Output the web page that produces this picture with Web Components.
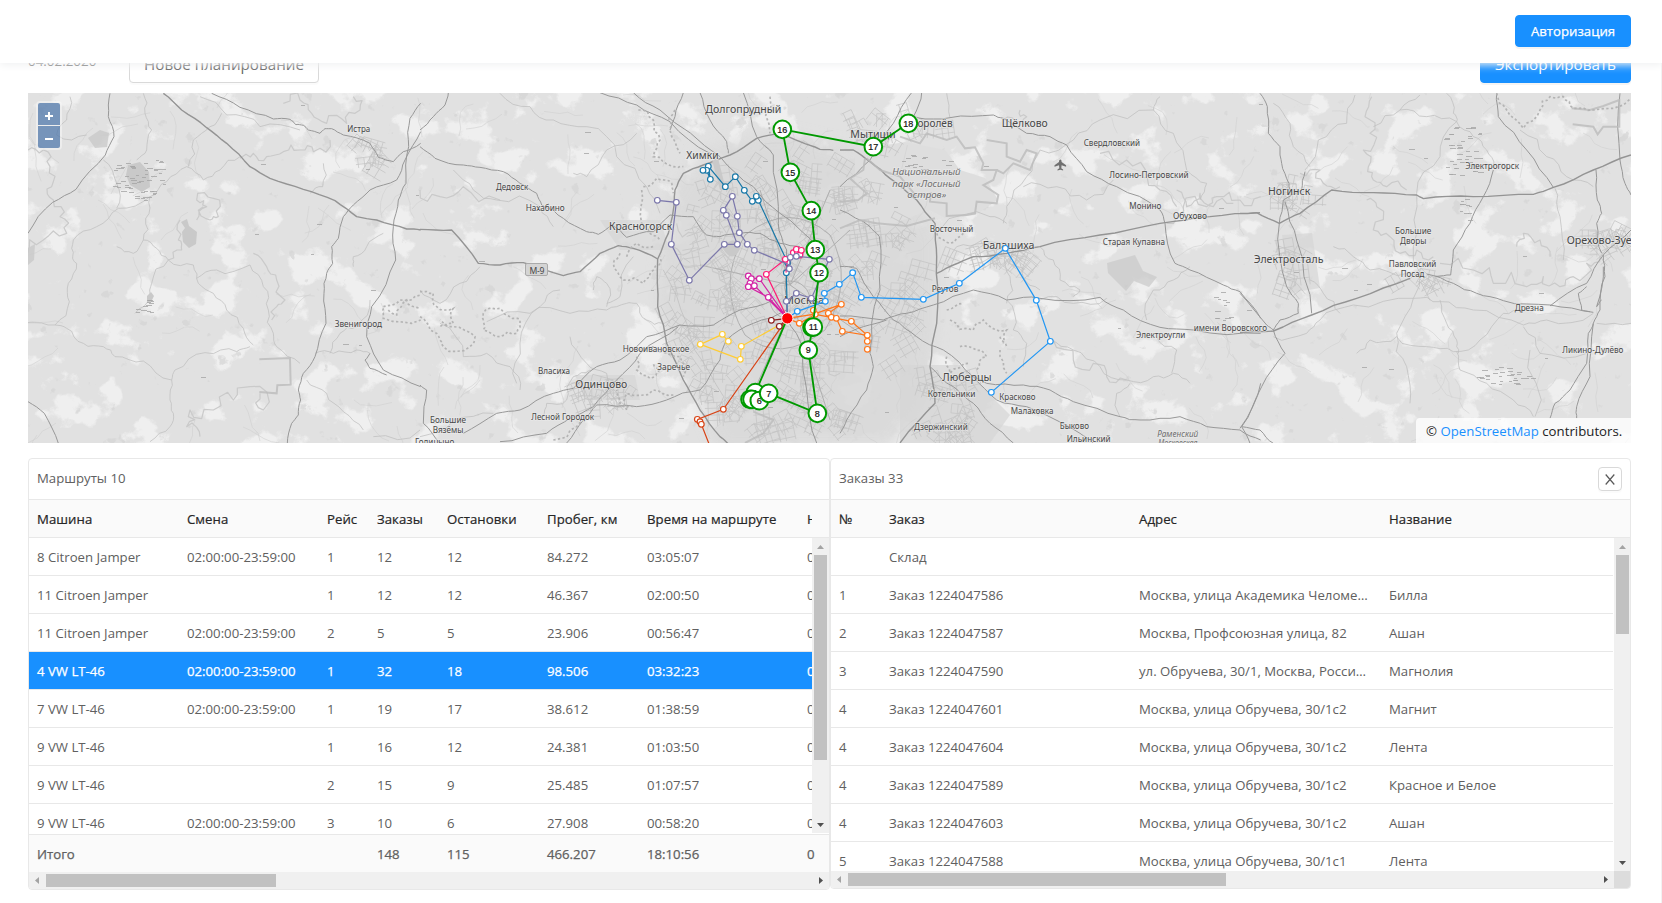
<!DOCTYPE html>
<html lang="ru">
<head>
<meta charset="utf-8">
<title>Планирование маршрутов</title>
<style>
html,body{margin:0;height:903px;overflow:hidden;background:#fff}
body{font:13.2px/20px "Open Sans","Noto Sans",sans-serif;color:#606060}
</style>
</head>
<body>
<planner-app></planner-app>
<script>
const define = (name, render, after) => customElements.define(name, class extends HTMLElement {
  connectedCallback() {
    if (this.shadowRoot) return;
    this.attachShadow({ mode: 'open' }).innerHTML = render(this);
    if (after) after(this);
  }
});

define('ui-button', () => `<style>
:host{display:flex;align-items:center;justify-content:center;box-sizing:border-box;height:32px;border:1px solid #d9d9d9;border-radius:4px;background:#fff;color:#606060;box-shadow:0 2px 0 rgba(0,0,0,.015);white-space:nowrap}
:host([primary]){background:#1890ff;border-color:#1890ff;color:#fff;box-shadow:0 2px 0 rgba(0,0,0,.045)}
:host([large]){height:40px;font-size:15.2px;padding-top:2px}
:host([small]){height:24px;width:24px;font-size:13.2px}
</style><slot></slot>`);

define('app-header', () => `<style>
:host{display:flex;flex:none;height:63px;box-sizing:border-box;padding:15px 31px 0 0;justify-content:flex-end;align-items:flex-start;background:#fff;box-shadow:0 2px 8px #f0f1f2;position:relative;z-index:2}
ui-button{width:116px;-webkit-text-stroke:.25px}
</style><ui-button primary>Авторизация</ui-button>`);

define('plan-toolbar', () => `<style>
:host{display:flex;flex:none;height:40px;margin:-20px 31px 10px 28px;align-items:flex-start}
span{width:101px;line-height:36px;font-size:13.4px}
.gap{flex:1}
</style><span>04.02.2020</span><ui-button large style="width:190px">Новое планирование</ui-button><div class="gap"></div><ui-button large primary style="width:151px">Экспортировать</ui-button>`);

/* Scroll bar with arrows; the thumb length is given in pixels. */
define('scroll-bar', el => {
  const v = el.hasAttribute('vertical'), l = el.getAttribute('length');
  return `<style>
:host{display:flex;flex:none;flex-direction:${v ? 'column' : 'row'};background:#f0f0f0;${v ? 'width:17px' : 'height:17px'};align-items:center;justify-content:space-between}
i{display:block;background:#c1c1c1;${v ? `width:13px;height:${l}px` : `height:13px;width:${l}px`}}
b{flex:1}svg{display:block;flex:none}
</style><svg width="17" height="17"><path fill="#a3a3a3" d="${v ? 'M5 11h7L8.5 7z' : 'M10 5v7L6 8.5z'}"/></svg><i></i><b></b><svg width="17" height="17"><path fill="#505050" d="${v ? 'M5 7h7L8.5 11z' : 'M7 5v7l4-3.5z'}"/></svg>`;
});

const TABLES = {
  routes: {
    cols: [150, 140, 50, 70, 100, 100, 160, 60],
    head: ['Машина', 'Смена', 'Рейс', 'Заказы', 'Остановки', 'Пробег, км', 'Время на маршруте', 'Н'],
    rows: [
      ['8 Citroen Jamper', '02:00:00-23:59:00', '1', '12', '12', '84.272', '03:05:07', '0'],
      ['11 Citroen Jamper', '', '1', '12', '12', '46.367', '02:00:50', '0'],
      ['11 Citroen Jamper', '02:00:00-23:59:00', '2', '5', '5', '23.906', '00:56:47', '0'],
      ['4 VW LT-46', '02:00:00-23:59:00', '1', '32', '18', '98.506', '03:32:23', '0'],
      ['7 VW LT-46', '02:00:00-23:59:00', '1', '19', '17', '38.612', '01:38:59', '0'],
      ['9 VW LT-46', '', '1', '16', '12', '24.381', '01:03:50', '0'],
      ['9 VW LT-46', '', '2', '15', '9', '25.485', '01:07:57', '0'],
      ['9 VW LT-46', '02:00:00-23:59:00', '3', '10', '6', '27.908', '00:58:20', '0']],
    active: 3,
    foot: ['Итого', '', '', '148', '115', '466.207', '18:10:56', '0'],
    clip: 783, v: [205, 295], h: 230
  },
  orders: {
    cols: [50, 250, 250, 250],
    head: ['№', 'Заказ', 'Адрес', 'Название'],
    rows: [
      ['', 'Склад', '', ''],
      ['1', 'Заказ 1224047586', 'Москва, улица Академика Челоме…', 'Билла'],
      ['2', 'Заказ 1224047587', 'Москва, Профсоюзная улица, 82', 'Ашан'],
      ['3', 'Заказ 1224047590', 'ул. Обручева, 30/1, Москва, Росси…', 'Магнолия'],
      ['4', 'Заказ 1224047601', 'Москва, улица Обручева, 30/1с2', 'Магнит'],
      ['4', 'Заказ 1224047604', 'Москва, улица Обручева, 30/1с2', 'Лента'],
      ['4', 'Заказ 1224047589', 'Москва, улица Обручева, 30/1с2', 'Красное и Белое'],
      ['4', 'Заказ 1224047603', 'Москва, улица Обручева, 30/1с2', 'Ашан'],
      ['5', 'Заказ 1224047588', 'Москва, улица Обручева, 30/1с1', 'Лента']],
    active: -1, clip: 800, v: [79, 333], h: 378
  }
};
define('data-grid', el => {
  const t = TABLES[el.getAttribute('source')], orders = !t.foot;
  const row = (r, c = '') => `<div class="r ${c}">${r.map(x => `<span>${x}</span>`).join('')}</div>`;
  return `<style>
:host{display:flex;flex-direction:column}
.r{display:grid;grid-template-columns:${t.cols.map(c => c + 'px').join(' ')};height:37px;line-height:39px;border-bottom:1px solid #e8e8e8}
span{padding:0 8px;white-space:nowrap;height:37px}
.h{background:#fafafa;color:#262626;-webkit-text-stroke:.2px;letter-spacing:.05px}
.clip{overflow:hidden;width:${t.clip}px}
.head{background:#fafafa;border-bottom:1px solid #e8e8e8}.head .r{border:0}
.body{display:flex;height:${t.v[1]}px;overflow:hidden}
.rows{overflow:hidden;width:${orders ? 782 : 783}px;${orders ? 'margin-right:1px' : ''}}
.a{background:#1890ff;color:#fff;-webkit-text-stroke:.25px}
.f{background:#fafafa;border:0;border-top:1px solid #e8e8e8;-webkit-text-stroke:.25px;overflow:hidden}
.foot{padding-top:1px}
.hs{display:flex}.hs scroll-bar{flex:1}.corner{width:16px;background:#dcdcdc}
.v{overflow:hidden}
</style>
<div class="head"><div class="clip">${row(t.head, 'h')}</div></div>
<div class="body"><div class="rows">${t.rows.map((r, i) => row(r, i === t.active ? 'a' : '')).join('')}</div><scroll-bar class="v" vertical length="${t.v[0]}" ${orders ? 'style="width:16px"' : ''}></scroll-bar></div>
${t.foot ? `<div class="foot">${row(t.foot, 'f')}</div>` : ''}
<div class="hs"><scroll-bar length="${t.h}"></scroll-bar>${orders ? '<div class="corner"></div>' : ''}</div>`;
});

define('data-card', el => `<style>
:host{display:block;box-sizing:border-box;border:1px solid #e8e8e8;border-radius:4px;overflow:hidden;background:#fff}
header{display:flex;justify-content:space-between;align-items:center;height:40px;padding:0 8px;border-bottom:1px solid #e8e8e8}
header>span{margin-top:-2px}
</style><header><span>${el.getAttribute('title-text')}</span><slot name="action"></slot></header><slot></slot>`);

/* ---- map ---- */
/* Each sheet is traced on a grid of thirds of a pixel with its own origin. */
const ORIGIN = { a: [0, 0], b: [420, 90], m: [640, 90], d: [840, 90], e: [1240, 0] };
const ROADS = {
  a: {
    main: ['490,280 545,330 620,383 680,430 750,500 810,535 910,568 1005,602 1070,650 1130,660 1220,687 1262,690'],
    mid: ['330,280 325,350 342,410 316,465 228,568 158,607 84,700',
      '635,280 720,322 820,357 870,358 888,374 910,376 925,390 960,400 975,386 995,386 1030,405 1110,430 1135,472 1180,485 1210,455 1262,430',
      '1262,310 1230,355 1226,440 1218,550 1195,600 1180,680 1187,780 1115,920 1100,1010 1150,1110 1262,1160',
      '1262,395 1215,480 1190,540 1110,570 1060,615 1030,650 1015,715 995,740 998,790 980,820 972,880 978,970 945,1070 910,1120 895,1170 902,1200 895,1245 875,1270 862,1330',
      '84,1205 133,1240 175,1330', '1110,1060 1095,1080 1110,1105 1160,1125'],
    low: ['84,968 165,975 200,985 250,1030 310,1040 345,1070 430,1083 515,1140 525,1110 615,1058 710,1055 750,1040',
      '720,470 660,510 610,540 560,500 500,545 450,590 355,625 290,680 220,720 218,770 230,790 205,850 208,905 165,975',
      '450,590 437,655 430,720 470,745 505,780 580,795 595,850 640,880 680,930 730,985 760,1035', '505,780 455,850 450,890 405,940',
      '515,1140 510,1200 520,1240 510,1280 450,1325', '310,480 350,550 350,625', '590,835 650,810 750,795 790,860 805,930 820,1000 830,1040 900,1090',
      '945,1060 1000,1060 1070,1050 1110,1060', '430,280 435,340 455,390 440,450 410,480', '210,290 200,360 170,405 260,405',
      '600,290 680,345 780,380 900,390', '565,500 580,420 630,380 665,340', '920,1140 980,1180 1030,1235 1090,1290', '970,490 968,560 930,580',
      '430,720 400,760 350,740', '1120,1310 1260,1290', '1060,800 1060,770 1100,740 1150,700', '990,1060 1020,1000 1070,980 1110,900'],
    river: ['84,760 130,720 200,700 180,650 160,600 155,560 150,500 130,450 84,450', '720,475 760,460 800,470 850,455 900,450 940,455 990,420',
      '590,660 620,620 590,600 640,595 655,650 630,660 610,620', '760,760 800,800 830,840 855,900 830,920 815,960',
      '780,1180 790,1230 750,1160 700,1200 640,1230 570,1230 560,1280 600,1310', '850,310 900,300 935,340 980,370 1040,370 1080,330 1060,290', '540,660 535,720 545,750 505,780']
  },
  b: {
    main: ['0,418 95,420 175,520 240,525 310,518 430,557 480,545 540,490 595,467 640,475 713,507',
      '1240,181 1200,178 1140,155 1080,130 1010,145 930,195 850,225 790,250 765,300 757,380 745,430 713,507 713,650 740,760 790,870 840,960 900,1040 925,1062'],
    mid: ['0,170 45,205 130,225 180,232 250,245 300,280 350,310 365,345 430,385 500,425 535,433 575,405 620,442 700,425 750,375 820,380 860,435 900,440 960,430 1020,430 1080,460 1140,470',
      '85,8 75,45 40,80 0,120', '540,8 650,45 750,95 870,190', '640,8 720,60 900,200 1000,290 1080,370 1200,480', '790,8 765,80 750,120', '840,8 870,90 920,155 925,190',
      '970,8 1010,140 1060,195 1075,400 1100,480 1100,630', '130,1030 230,970 300,960 400,910 460,895 530,830 600,810 680,740 780,705 880,705 960,660 1060,630',
      '240,1055 380,1030 450,985 520,950 590,870 660,790 775,710', '440,1059 490,990 530,945 650,950 740,930 840,900 900,810 920,750 1000,700 1100,660',
      '0,885 20,900 10,1000 60,1059', '1100,685 1150,780 1160,900 1190,1059'],
    low: ['200,695 330,670 450,670 560,660 620,640 650,640 680,690 730,700', '240,10 330,50 400,90 500,110 590,200 680,290 720,370',
      '100,240 160,300 230,330 360,350 400,410', '0,600 60,640 120,580 180,530', '300,900 270,830 200,790 130,800 60,700', '420,600 360,650 300,760 290,880',
      '450,740 500,820 560,850 610,960', '0,1040 100,990 220,970', '370,980 380,940 440,930 460,860 510,840', '520,600 530,560 560,580 560,650', '650,130 560,180 500,260 460,250', '640,500 600,620 560,640', '730,540 800,700 870,850 900,1000'],
    river: ['860,220 880,300 920,360 925,420 960,520 1000,560', '770,400 830,430 820,470 760,470 780,520 840,540 880,510 900,570 1000,620 1030,650', '1100,690 1040,740 1100,800 1190,760 1220,820 1260,850', '0,300 60,320 130,290 240,330']
  },
  d: {
    main: ['290,550 340,525 400,500 500,490 600,470 780,435 960,400 1110,380 1260,368', '0,180 40,180 90,215 150,265 230,330 285,400 290,500 290,700 270,830 285,940 180,1059'],
    mid: ['215,8 160,100 90,210 0,290', '245,8 220,80 170,125', '230,83 330,83 460,75 490,85 560,130 630,140 680,165 740,245 830,290 960,360 975,400 1005,520 1050,540 1150,585 1200,605 1262,685',
      '0,678 130,690 200,670 280,645 400,600 500,630 600,625 780,622 850,660 960,712 1060,720 1262,730', '0,530 50,535 100,620 160,690 230,740 310,780 400,860 470,930 560,950 720,1030 760,1059',
      '400,860 440,880 550,885 630,900 700,935 840,980 900,990 1020,980 1100,1010 1200,1020 1262,1050', '270,830 340,890 400,940 450,1000 520,1059',
      '0,360 90,410 118,440 120,600 95,700 90,790 100,830 80,900 20,990 0,1030', '1200,1015 1262,880', '0,740 70,710 140,690'],
    low: ['330,540 320,520 350,470 430,460', '600,470 640,510 660,570 720,600 700,620', '550,290 650,290 740,330 820,270', '630,750 700,780 780,830 860,870 940,860 1000,850 1050,880',
      '950,740 1010,780 995,850', '500,490 510,560 500,640', '490,400 500,350 560,260 600,180 700,150 780,90 940,60 960,20', '940,60 1000,130 1040,240 1100,280 1080,330',
      '500,400 450,380 300,420', '540,520 550,560 600,600', '1050,530 1000,570 940,600 920,690', '840,980 830,910 870,880', '600,630 700,640 800,625', '320,10 330,83', '500,630 520,720 560,760 550,830'],
    river: ['980,400 1030,350 1100,350 1130,320 1200,330 1262,320', '640,750 700,810 760,820 800,860 860,870', '780,190 860,210 900,260 960,300 1010,350', '1010,300 1040,350 1080,310 1120,350 1180,340', '540,60 560,80 530,110 490,90']
  },
  e: {
    main: ['0,640 50,638 118,670 180,640 275,570 400,578 530,585 550,596 700,590 880,583 940,562 1060,510 1173,465', '0,997 100,993 215,945 350,895 510,835'],
    mid: ['60,280 82,320 85,400 120,440 125,490 147,550 150,585', '195,515 185,570 130,600 118,670 140,860 175,910 175,940 120,960 100,990', '770,280 775,350 860,450 940,562',
      '1140,280 1140,480 1155,550 1173,585', '135,605 170,720 215,940', '560,822 640,850 710,880 790,902 930,915 1060,937', '760,510 730,590 690,670 640,750 632,825 590,830',
      '930,918 1040,850 1090,765 1173,690', '1090,765 1095,830 1080,930 1060,970 1045,1000 1040,1090 990,1170 945,1210 930,1255', '1060,970 1050,1130 1010,1220 1010,1255',
      '0,880 80,975 100,990 135,1060 65,1160 5,1280 60,1290 100,1330', '5,1280 30,1330', '1068,510 1072,600 1085,640 1070,670 1085,760', '1090,800 1070,920 1085,900', '1040,860 1015,880 1025,930 1050,935'],
    low: ['945,565 960,650 970,780', '240,960 340,915 520,895 600,905 700,930 850,975 920,960 1060,940', '520,895 470,1000 500,1100 510,1210', '350,1060 390,1020 470,1010 560,1040 640,1055 720,1020 790,940 850,930',
      '650,1055 660,1110 740,1150 820,1200 880,1250', '850,980 900,1060 1040,1060', '195,510 235,420 320,370 345,285', '400,380 480,330 540,285', '480,330 560,350 650,365 700,410 740,450 760,500',
      '650,365 600,470 530,580 520,740 520,895', '600,900 620,970 650,1020 655,1060', '210,840 250,880 300,940', '280,740 340,770 390,810 500,820', '840,390 920,470 980,530 1060,560', '620,280 640,340 650,365', '100,310 150,370 160,440 210,500', '870,1050 885,1250', '1070,970 1173,970', '100,1010 200,1000 240,960'],
    river: ['395,290 375,350 390,400 370,450 385,500 400,540 440,560 500,570', '380,600 410,620 400,690 450,710 480,760 530,750 580,770', '600,790 700,810 760,850 860,860 910,830 960,860 1000,830 1040,790 1080,770', '180,520 240,510 250,550 300,560', '830,740 850,700 900,720 930,770']
  }
};
const PARKS = {
  a: ['778,1078 870,1074 872,1154 832,1156 830,1180 778,1176'],
  d: ['180,140 240,160 260,130 320,150 350,140 375,175 405,172 430,220 425,240 470,240 460,270 430,285 475,315 470,340 410,335 405,370 380,375 320,378 320,340 270,335 272,310 230,320 180,260 120,240 80,205', '75,205 70,240 30,265 80,310 55,330 0,335', '0,415 60,390 110,400 200,408 285,385', '440,150 500,160 500,200 540,215 560,180 590,190 570,240 520,220 490,250 470,240'],
  e: ['995,325 1050,330 1090,318 1138,300 1138,380 1090,380 1073,403 1060,380 998,373'],
  b: ['1000,965 1060,990 1030,1030 975,1059']
};
const DOTS = {
  a: ['1150,920 1200,900 1262,885', '1150,925 1150,955 1262,960', '1165,930 1190,945 1220,900 1262,925'],
  b: ['0,605 40,610 50,650 100,655 100,700 60,710', '0,680 30,720 60,750 70,770 150,770 165,740 100,710 60,690', '190,690 190,670 240,655 270,680 300,690 290,730 240,740 190,720 190,690', '600,490 580,520 610,570 670,580 700,540 720,500', '620,500 650,460 700,470', '670,290 710,265 755,280 760,310', '665,300 665,400 690,430 720,450', '655,60 700,90 720,150 700,200 760,230 790,230', '765,60 750,120 780,190', '655,780 720,785 780,800 790,860', '650,800 650,840 690,865 720,840 700,820', '620,960 620,910 700,900 760,915', '1050,20 1050,130', '400,1050 470,1010 500,990', '640,950 600,940 590,900'],
  d: ['330,690 400,720 430,690 500,720 490,760', '360,770 400,775 440,800 410,840', '320,800 330,850 390,820', '290,430 330,460 370,430', '320,660 370,640', '480,780 500,850', '480,740 500,770'],
  e: ['770,280 800,330 850,385 900,330 930,290 970,290 1000,325 1060,330 1173,295']
};
/* sheet, left, right, baseline, size, text */
const LABELS = [
  ['a', 1042, 1111, 397, 8.6, 'Истра'], ['a', 1004, 1146, 980, 8.6, 'Звенигород'],
  ['b', 228, 325, 301, 8.6, 'Дедовск'], ['b', 317, 434, 363, 8.6, 'Нахабино'], ['b', 567, 757, 421, 10.5, 'Красногорск'], ['b', 856, 1084, 69, 10.5, 'Долгопрудный'], ['b', 799, 896, 208, 10.5, 'Химки'],
  ['b', 608, 808, 785, 8.6, 'Новоивановское'], ['b', 712, 810, 839, 8.6, 'Заречье'], ['b', 354, 450, 851, 8.6, 'Власиха'], ['b', 466, 622, 894, 10.5, 'Одинцово'], ['b', 334, 522, 989, 8.6, 'Лесной Городок'],
  ['b', 30, 138, 998, 8.6, 'Большие'], ['b', 38, 130, 1029, 8.6, 'Вязёмы'], ['b', -15, 103, 1066, 8.6, 'Голицыно'], ['b', 1092, 1212, 643, 10.5, 'Москва'],
  ['d', 31, 167, 144, 10.5, 'Мытищи'], ['d', 214, 338, 110, 10.5, 'Королёв'], ['d', 485, 623, 112, 10.5, 'Щёлково'], ['d', 731, 900, 167, 8.6, 'Свердловский'], ['d', 808, 1046, 265, 8.6, 'Лосино-Петровский'],
  ['d', 157, 362, 254, 9.5, 'Национальный', 1], ['d', 157, 362, 290, 9.5, 'парк «Лосиный', 1], ['d', 202, 319, 323, 9.5, 'остров»', 1],
  ['d', 868, 964, 356, 8.6, 'Монино'], ['d', 999, 1101, 388, 8.6, 'Обухово'], ['d', 269, 400, 427, 8.6, 'Восточный'], ['d', 428, 583, 478, 10.5, 'Балашиха'], ['d', 788, 975, 466, 8.6, 'Старая Купавна'],
  ['d', 275, 355, 605, 8.6, 'Реутов'], ['d', 888, 1036, 743, 8.6, 'Электроугли'], ['d', 1061, 1281, 722, 8.6, 'имени Воровского'], ['d', 307, 455, 872, 10.5, 'Люберцы'], ['d', 263, 406, 920, 8.6, 'Котельники'],
  ['d', 478, 587, 930, 8.6, 'Красково'], ['d', 512, 640, 972, 8.6, 'Малаховка'], ['d', 659, 747, 1016, 8.6, 'Быково'], ['d', 680, 812, 1056, 8.6, 'Ильинский'], ['d', 222, 383, 1019, 8.6, 'Дзержинский'],
  ['d', 952, 1075, 1040, 8.6, 'Раменский', 1], ['d', 955, 1072, 1068, 8.6, 'Московская', 1],
  ['e', 84, 211, 585, 10.5, 'Ногинск'], ['e', 41, 250, 790, 10.5, 'Электросталь'], ['e', 676, 837, 508, 8.6, 'Электрогорск'], ['e', 465, 574, 701, 8.6, 'Большие'], ['e', 480, 559, 731, 8.6, 'Дворы'],
  ['e', 446, 589, 800, 8.6, 'Павловский'], ['e', 482, 553, 830, 8.6, 'Посад'], ['e', 980, 1212, 733, 10.5, 'Орехово-Зуево'], ['e', 824, 911, 932, 8.6, 'Дрезна'], ['e', 967, 1150, 1059, 8.6, 'Ликино-Дулёво']
];
const ROUTES = [
  ['#1878a8', '442,685 439,548 443,518 355,331 349,319 337,334 313,301 286,260 256,290 205,229 211,268 200,241 189,241'],
  ['#ff1a75', '442,685 379,553 436,508 460,490 469,478 484,481 480,495 464,488 442,510 438,548', '379,553 460,488 472,486 480,495 469,478 484,481 436,508'],
  ['#7b77ab', '442,685 439,634 469,610 514,625 568,508 469,499 451,502 448,536 445,523 343,481 322,463 298,428 292,379 277,319 250,361 259,376 292,463 253,463 148,571 94,463 109,337 52,331', '439,634 469,610 514,625 568,508 469,499 451,502 448,536 343,481 322,463 298,428 292,379 277,319 250,361 259,376 292,463 253,463 148,571 94,463 109,337 52,331'],
  ['#d322a4', '442,685 358,566 334,566 325,558 330,580 325,590 343,587 334,578 442,685 385,622 325,590', '325,558 334,566 358,566 330,580 325,590 343,587 385,622'],
  ['#fc3', '418,705 304,769 301,808 181,763 247,733 265,754', '304,769 301,808 181,763 247,733 265,754'],
  ['#d84315', '442,685 250,958 172,988 180,995 184,1003 208,1064', '250,958 172,988 180,995 184,1003'],
  ['#8c1c1c', '394,691 442,685 418,709', '394,691 418,709'],
  ['#2196f3', '442,685 472,664 556,634 553,610 598,583 638,548 664,622 850,628 958,580 1096,475 1189,631 1231,754 1054,907', '472,664 556,634 553,610 598,583 638,548 664,622 850,628 958,580 1096,475 1189,631 1231,754 1054,907'],
  ['#ff7518', '442,685 520,673 604,643 565,670 574,682 589,685 634,694 682,736 607,724 589,685 526,673 478,700 442,685', '478,700 526,673 520,661 604,643 565,670 574,682 589,685 634,694 607,724 682,736 682,754 682,778']
];
const STOPS = [[346, 908, '1'], [330, 928, '4'], [336, 928, '5'], [358, 932, '6'], [386, 910, '7'], [532, 970, '8'], [505, 780, '9'], [516, 712, '10'], [520, 711, '11'], [537, 548, '12'], [526, 479, '13'], [514, 362, '14'], [451, 247, '15'], [427, 118, '16'], [700, 170, '17'], [805, 100, '18']];

const rng = s => () => (s = (s * 16807) % 2147483647) / 2147483647;
const pl = (pts, extra = '') => `<polyline points="${pts}" ${extra}/>`;
const sheet = (k, inner) => `<g transform="translate(${ORIGIN[k]}) scale(.33333)">${inner}</g>`;

/* Adds small bends to a traced polyline so that it winds like a real road or river. */
function bend(pts, amount, r) {
  let p = pts.split(' ').map(s => s.split(',').map(Number));
  for (let n = 0; n < 2; n++) {
    const q = [p[0]];
    for (let i = 1; i < p.length; i++) {
      const [ax, ay] = p[i - 1], [bx, by] = p[i], k = (r() - .5) * amount;
      q.push([(ax + bx) / 2 - (by - ay) * k, (ay + by) / 2 + (bx - ax) * k], p[i]);
    }
    p = q;
  }
  return p.map(([x, y]) => x.toFixed(0) + ',' + y.toFixed(0)).join(' ');
}
/* City blocks: small rotated street grids scattered inside a town outline. */
function streets(cx, cy, rx, ry, n, seed) {
  const r = rng(seed); let out = '';
  for (let i = 0; i < n; i++) {
    const a = r() * 6.283, d = Math.sqrt(r()), x = cx + Math.cos(a) * d * rx, y = cy + Math.sin(a) * d * ry;
    const w = 8 + r() * 20, h = 7 + r() * 16, rot = Math.round(r() * 90); let p = '';
    for (let k = 0; k <= w; k += 5 + r() * 5) p += `M${k.toFixed(1)} 0v${h.toFixed(1)}`;
    for (let k = 0; k <= h; k += 5 + r() * 5) p += `M0 ${k.toFixed(1)}h${w.toFixed(1)}`;
    out += `<path transform="translate(${x.toFixed(1)} ${y.toFixed(1)}) rotate(${rot})" d="${p}"/>`;
  }
  return out;
}
function marsh(cx, cy, rx, ry, n, seed) {
  const r = rng(seed); let p = '';
  for (let i = 0; i < n; i++) p += `M${(cx + (r() - .5) * 2 * rx).toFixed(0)} ${(cy + (r() - .5) * 2 * ry).toFixed(0)}.5h${(3 + r() * 3).toFixed(0)}`;
  return `<path d="${p}" stroke="#a4a4a4" stroke-width=".8"/>`;
}
function wisps(seed) {
  const r = rng(seed); let p = '';
  for (let i = 0; i < 210; i++) {
    let x = 28 + r() * 1603, y = 93 + r() * 350, a = r() * 6.28; p += `M${x.toFixed(0)} ${y.toFixed(0)}`;
    for (let j = 0; j < 5; j++) { a += (r() - .5) * 1.3; p += `l${(Math.cos(a) * 8).toFixed(1)} ${(Math.sin(a) * 8).toFixed(1)}`; }
  }
  return `<path d="${p}" stroke="#d0d0d0" stroke-width=".6"/>`;
}
function drawMap() {
  let roads = '';
  const r = rng(17);
  const style = { river: ['#cacaca', 1.2, .9], low: ['#bebebe', .75, .35], mid: ['#989898', 1, .12], main: ['#949494', 1.4, .06] };
  for (const kind of ['river', 'low', 'mid', 'main'])
    for (const k in ROADS) roads += `<g stroke="${style[kind][0]}" stroke-width="${style[kind][1] * 3}" stroke-linejoin="round">${sheet(k, ROADS[k][kind].map(p => pl(bend(p, style[kind][2], r))).join(''))}</g>`;
  for (const k in PARKS) roads += `<g stroke="#bcbcbc" stroke-width="6" opacity=".8">${sheet(k, PARKS[k].map(p => pl(p)).join(''))}</g>`;
  for (const k in DOTS) roads += `<g stroke="#b4b4b4" stroke-width="5" stroke-dasharray="7 7">${sheet(k, DOTS[k].map(p => pl(bend(p, .4, r))).join(''))}</g>`;
  const labels = LABELS.map(([k, l, r, y, s, t, it]) => {
    const [ox, oy] = ORIGIN[k];
    return `<text x="${(ox + l / 3).toFixed(1)}" y="${(oy + y / 3).toFixed(1)}" font-size="${s}" textLength="${((r - l) / 3).toFixed(1)}" lengthAdjust="spacingAndGlyphs" ${it ? 'font-style="italic" fill="#707070"' : ''}>${t}</text>`;
  }).join('');
  const routes = ROUTES.map(([c, line, pts]) => `<g stroke="${c}" stroke-width="3.6">${pl(line, 'fill="none"')}${(pts || line.split(' ').slice(1).join(' ')).split(' ').map(p => { const [x, y] = p.split(','); return `<circle cx="${x}" cy="${y}" r="8.5" fill="#fff"/>`; }).join('')}</g>`).join('');
  const green = '442,685 346,908 330,928 358,932 386,910 532,970 505,780 518,712 537,548 526,479 514,362 451,247 427,118 700,170 805,100';
  return `<svg viewBox="28 93 1603 350" width="1603" height="350" fill="none">
<defs>
<filter id="fields" x="0" y="0" width="100%" height="100%" color-interpolation-filters="sRGB"><feTurbulence type="fractalNoise" baseFrequency=".024 .028" numOctaves="6" seed="8"/><feColorMatrix values="0 0 0 0 .937  0 0 0 0 .937  0 0 0 0 .937  12 4 0 0 -9"/></filter>
<filter id="woods" x="0" y="0" width="100%" height="100%" color-interpolation-filters="sRGB"><feTurbulence type="fractalNoise" baseFrequency=".06" numOctaves="4" seed="21"/><feColorMatrix values="0 0 0 0 .835  0 0 0 0 .835  0 0 0 0 .835  14 0 0 0 -10.200"/></filter>
<filter id="soft"><feGaussianBlur stdDeviation="7"/></filter>
</defs>
<rect x="28" y="93" width="1603" height="350" fill="#e1e1e1"/>
<rect x="28" y="93" width="1603" height="350" filter="url(#fields)"/>
<rect x="28" y="93" width="1603" height="350" filter="url(#woods)" opacity=".7"/>
<path d="M668 200L700 150L780 132L860 150L905 178L936 235L936 330L925 400L890 450L720 450L680 360L657 300Z" fill="#d9d9d9" opacity=".82" filter="url(#soft)"/>
<path d="M855 150L905 142L945 150L960 170L985 178L998 200L975 215L945 218L930 210L890 225L855 230Z" fill="#dedede"/>
<path d="M900 365l60 0l50 50l-20 28h-90zM1282 235l30 -2l8 55l-30 5zM600 220h60l10 30h-50zM575 375h60l5 25h-55z" fill="#d6d6d6" opacity=".7"/>
${wisps(77)}
<g stroke="#c4c4c4" stroke-width=".7">${streets(790, 285, 125, 150, 190, 31)}${streets(950, 395, 40, 40, 22, 9)}${streets(985, 245, 40, 14, 14, 19)}${streets(1292, 260, 18, 25, 9, 13)}${streets(900, 120, 65, 18, 15, 43)}${streets(605, 385, 35, 15, 14, 57)}${streets(1415, 275, 22, 9, 7, 67)}${streets(1605, 230, 20, 28, 9, 99)}${streets(1290, 185, 20, 15, 8, 4)}${streets(370, 145, 22, 15, 7, 46)}</g>
<g stroke="#b0b0b0" stroke-width="1"><ellipse cx="790" cy="300" rx="20" ry="19"/><path d="M745 235q45-35 85 0q25 45-5 95q-45 35-80 5q-30-50 0-100z"/><path d="M790 285L760 190M790 285L700 265M790 285L850 230M790 285L870 340M790 310L750 400M795 310L830 420M790 285L830 190"/></g>
${roads}
<g fill="#c9c9c9"><path d="M128 165l12-3 9 10 1 15-8 5-12-7-4-10z"/><path d="M181 222l6-3 2 7 8 6-1 12-7 4-6-6-1-10 3-4zM147 296l4-4 3 4-3 6-4 1z"/><path d="M88 138l12-8 9 3-2 14-12 1zM28 248l7-4-1 16-6 5z" opacity=".8"/><path d="M1107 263l28-8 8 16 14 6-8 10-15-6-8 10-18-18z" opacity=".7"/><path d="M722 247q14-14 18 2q-8 16-18-2M712 160l8 30 6 0-8-32z"/></g>
${marsh(138, 180, 25, 20, 55, 5)}${marsh(144, 306, 8, 6, 12, 15)}${marsh(1462, 150, 18, 25, 45, 25)}${marsh(1505, 375, 28, 9, 32, 35)}${marsh(925, 165, 26, 9, 20, 45)}${marsh(1222, 305, 8, 16, 12, 55)}${marsh(1465, 210, 5, 12, 10, 65)}${marsh(900, 260, 700, 160, 50, 75)}
<path d="M1060.300 159.500c1 0 1.300 1 1.300 2.500l4.500 3.200v1.500l-4.500-1.500-.3 3 1.800 1.300v1l-2.800-.7-2.800.7v-1l1.800-1.300-.3-3-4.500 1.500v-1.500l4.500-3.200c0-1.500.3-2.500 1.300-2.500z" fill="#707070"/>
<rect x="525.500" y="263.500" width="22" height="12" rx="1.500" fill="#d4d4d4" stroke="#aaa"/>
<g font-family="Noto Sans" fill="#484848" stroke="#ececec" stroke-width="1.600" stroke-opacity=".65" paint-order="stroke">${labels}<text x="529.500" y="273.500" font-size="8.600" stroke="none" textLength="15">М-9</text></g>
<g transform="translate(640 90) scale(.33333)">${routes}
<polyline points="${green}" stroke="#090" stroke-width="5.500"/>
<circle cx="442" cy="685" r="17" fill="red" stroke="#fff" stroke-width="3"/>
<g font-family="Liberation Sans" font-size="27" text-anchor="middle">${STOPS.map(([x, y, t]) => `<circle cx="${x}" cy="${y}" r="26.500" fill="#fff" stroke="#009a00" stroke-width="6"/><text x="${x}" y="${y + 10.500}" fill="#111" stroke="#111" stroke-width=".6">${t}</text>`).join('')}</g></g>
</svg>`;
}
define('route-map', () => `<style>
:host{display:block;position:relative;flex:none;height:350px;margin:0 31px 0 28px;overflow:hidden;background:#e1e1e1}
svg{display:block}
.zoom{position:absolute;left:8px;top:8px;padding:2px;border-radius:4px;background:rgba(255,255,255,.4);display:grid;gap:1px}
.zoom b{width:22px;height:22px;background:rgba(0,60,136,.5);display:grid;place-items:center}
.zoom b:first-child{border-radius:2px 2px 0 0}.zoom b:last-child{border-radius:0 0 2px 2px}
.zoom svg{width:22px;height:22px}
.attr{position:absolute;right:0;bottom:0;width:215px;height:25px;box-sizing:border-box;padding-left:10px;border-radius:4px 0 0;background:rgba(255,255,255,.8);color:#222;line-height:26px;white-space:nowrap;letter-spacing:.03px}
.attr a{color:#1890ff}
</style>${drawMap()}
<div class="zoom"><b><svg viewBox="0 0 22 22"><path d="M7 13h8M11 9v8" stroke="#fff" stroke-width="2"/></svg></b><b><svg viewBox="0 0 22 22"><path d="M7 13h8" stroke="#fff" stroke-width="2"/></svg></b></div>
<div class="attr">© <a>OpenStreetMap</a> contributors.</div>`);

define('planner-app', () => `<style>
:host{display:flex;flex-direction:column;height:903px;box-sizing:border-box;border-right:1px solid #f2f2f2;width:1662px}
app-header{margin-right:-1px;padding-right:31px}
plan-toolbar,route-map{margin-right:30px}
.cards{display:grid;grid-template-columns:802px 801px;margin:15px 30px 0 28px;align-items:start}
ui-button[small]{height:24px}
</style><app-header></app-header><plan-toolbar></plan-toolbar><route-map></route-map>
<div class="cards"><data-card title-text="Маршруты 10"><data-grid source="routes"></data-grid></data-card>
<data-card title-text="Заказы 33"><ui-button slot="action" small><svg width="10" height="11" viewBox="0 0 10 11" fill="none" stroke="#595959" stroke-width="1.200"><path d="M.7.500l8.600 10M9.300.500l-8.600 10"/></svg></ui-button><data-grid source="orders"></data-grid></data-card></div>`);
</script>
</body>
</html>
